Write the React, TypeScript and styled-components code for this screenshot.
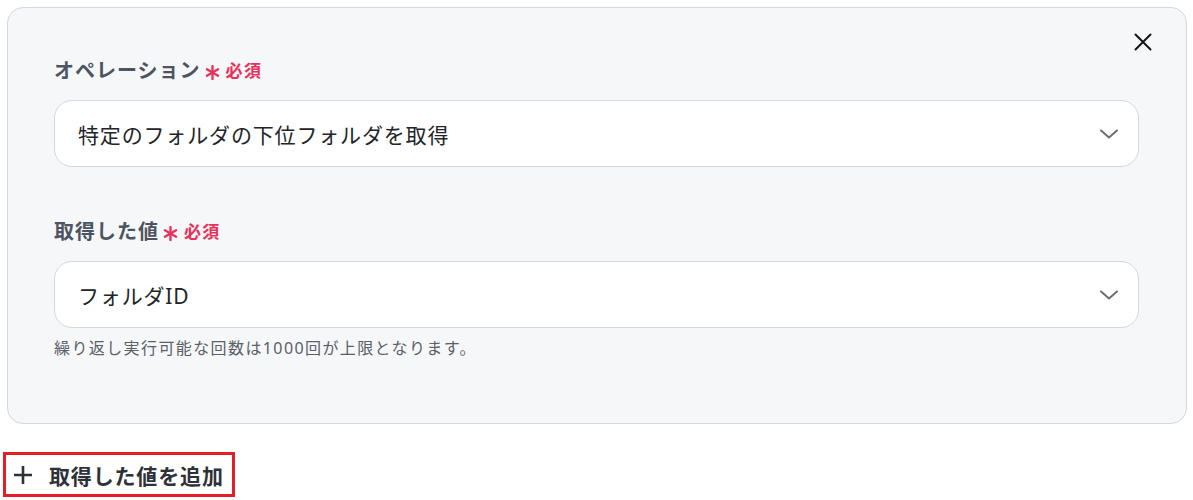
import React from "react";
import styled, { createGlobalStyle } from "styled-components";

const Global = createGlobalStyle`
  html, body { margin: 0; padding: 0; background: #ffffff; }
  body { font-family: "Noto Sans", "Noto Sans CJK JP", sans-serif; }
  * { box-sizing: border-box; }
`;

const Page = styled.div`
  width: 1193px;
  padding: 7px 6px 0 7px;
  display: flex;
  flex-direction: column;
  align-items: flex-start;
`;

const Card = styled.div`
  position: relative;
  width: 1180px;
  background: #f6f7f9;
  border: 1px solid #d4d8df;
  border-radius: 16px;
  padding: 50px 47px 64px 46px;
  display: flex;
  flex-direction: column;
  gap: 52px;
`;

const CloseButton = styled.button`
  position: absolute;
  top: 24px;
  right: 33px;
  width: 20px;
  height: 20px;
  padding: 0;
  border: none;
  background: transparent;
  display: flex;
  align-items: center;
  justify-content: center;
  cursor: pointer;
`;

const Field = styled.div`
  display: flex;
  flex-direction: column;
`;

const Label = styled.div`
  display: flex;
  align-items: center;
  height: 24px;
  font-family: "Noto Sans CJK JP", sans-serif;
  font-size: 20px;
  font-weight: 700;
  letter-spacing: 0.05em;
  color: #4d5461;
  line-height: 24px;
`;

const Required = styled.span`
  display: inline-flex;
  align-items: center;
  margin-left: 4px;
  color: #e8315b;
  font-size: 17px;
  font-weight: 700;
  letter-spacing: 0.08em;
  gap: 6px;
`;

const Asterisk = styled.svg`
  width: 15px;
  height: 15px;
  margin-top: 5px;
`;

const Select = styled.div`
  margin-top: 18px;
  height: 67px;
  background: #ffffff;
  border: 1px solid #d3d7de;
  border-radius: 18px;
  display: flex;
  align-items: center;
  justify-content: space-between;
  padding: 0 20px 0 23px;
  font-family: "Noto Sans", "Noto Sans CJK JP", sans-serif;
  font-size: 21px;
  letter-spacing: 0.04em;
  color: #222428;
`;

const Helper = styled.div`
  margin-top: 9px;
  font-family: "Noto Sans", "Noto Sans CJK JP", sans-serif;
  font-size: 16px;
  letter-spacing: 1.4px;
  line-height: 22px;
  color: #5a5f68;
`;

const AddButton = styled.button`
  margin: 28px 0 0 -4px;
  height: 45px;
  border: 3px solid #e51d26;
  background: #ffffff;
  padding: 0 8px 0 7px;
  display: flex;
  align-items: center;
  gap: 16px;
  font-family: "Noto Sans CJK JP", sans-serif;
  font-size: 21px;
  letter-spacing: 0.04em;
  font-weight: 700;
  color: #2e3138;
  cursor: pointer;
`;

const Chevron = () => (
  <svg width="18" height="10" viewBox="0 0 18 10" fill="none">
    <path d="M1 1.5 L9 8.5 L17 1.5" stroke="#6b6e73" strokeWidth="2" strokeLinecap="round" strokeLinejoin="round" />
  </svg>
);

const Star = () => (
  <Asterisk viewBox="0 0 14 14">
    <g stroke="#e8315b" strokeWidth="2.2" strokeLinecap="round">
      <line x1="7" y1="1" x2="7" y2="13" />
      <line x1="1.8" y1="4" x2="12.2" y2="10" />
      <line x1="1.8" y1="10" x2="12.2" y2="4" />
    </g>
  </Asterisk>
);

export default function App() {
  return (
    <>
      <Global />
      <Page>
        <Card>
          <CloseButton aria-label="close">
            <svg width="18" height="18" viewBox="0 0 18 18">
              <path d="M1.5 1.5 L16.5 16.5 M16.5 1.5 L1.5 16.5" stroke="#151515" strokeWidth="2" strokeLinecap="round" />
            </svg>
          </CloseButton>
          <Field>
            <Label>
              オペレーション
              <Required>
                <Star />
                必須
              </Required>
            </Label>
            <Select>
              <span>特定のフォルダの下位フォルダを取得</span>
              <Chevron />
            </Select>
          </Field>
          <Field>
            <Label>
              取得した値
              <Required>
                <Star />
                必須
              </Required>
            </Label>
            <Select>
              <span>フォルダID</span>
              <Chevron />
            </Select>
            <Helper>繰り返し実行可能な回数は1000回が上限となります。</Helper>
          </Field>
        </Card>
        <AddButton>
          <svg width="20" height="20" viewBox="0 0 20 20">
            <path d="M10 1 V19 M1 10 H19" stroke="#2e3138" strokeWidth="2.6" />
          </svg>
          取得した値を追加
        </AddButton>
      </Page>
    </>
  );
}
